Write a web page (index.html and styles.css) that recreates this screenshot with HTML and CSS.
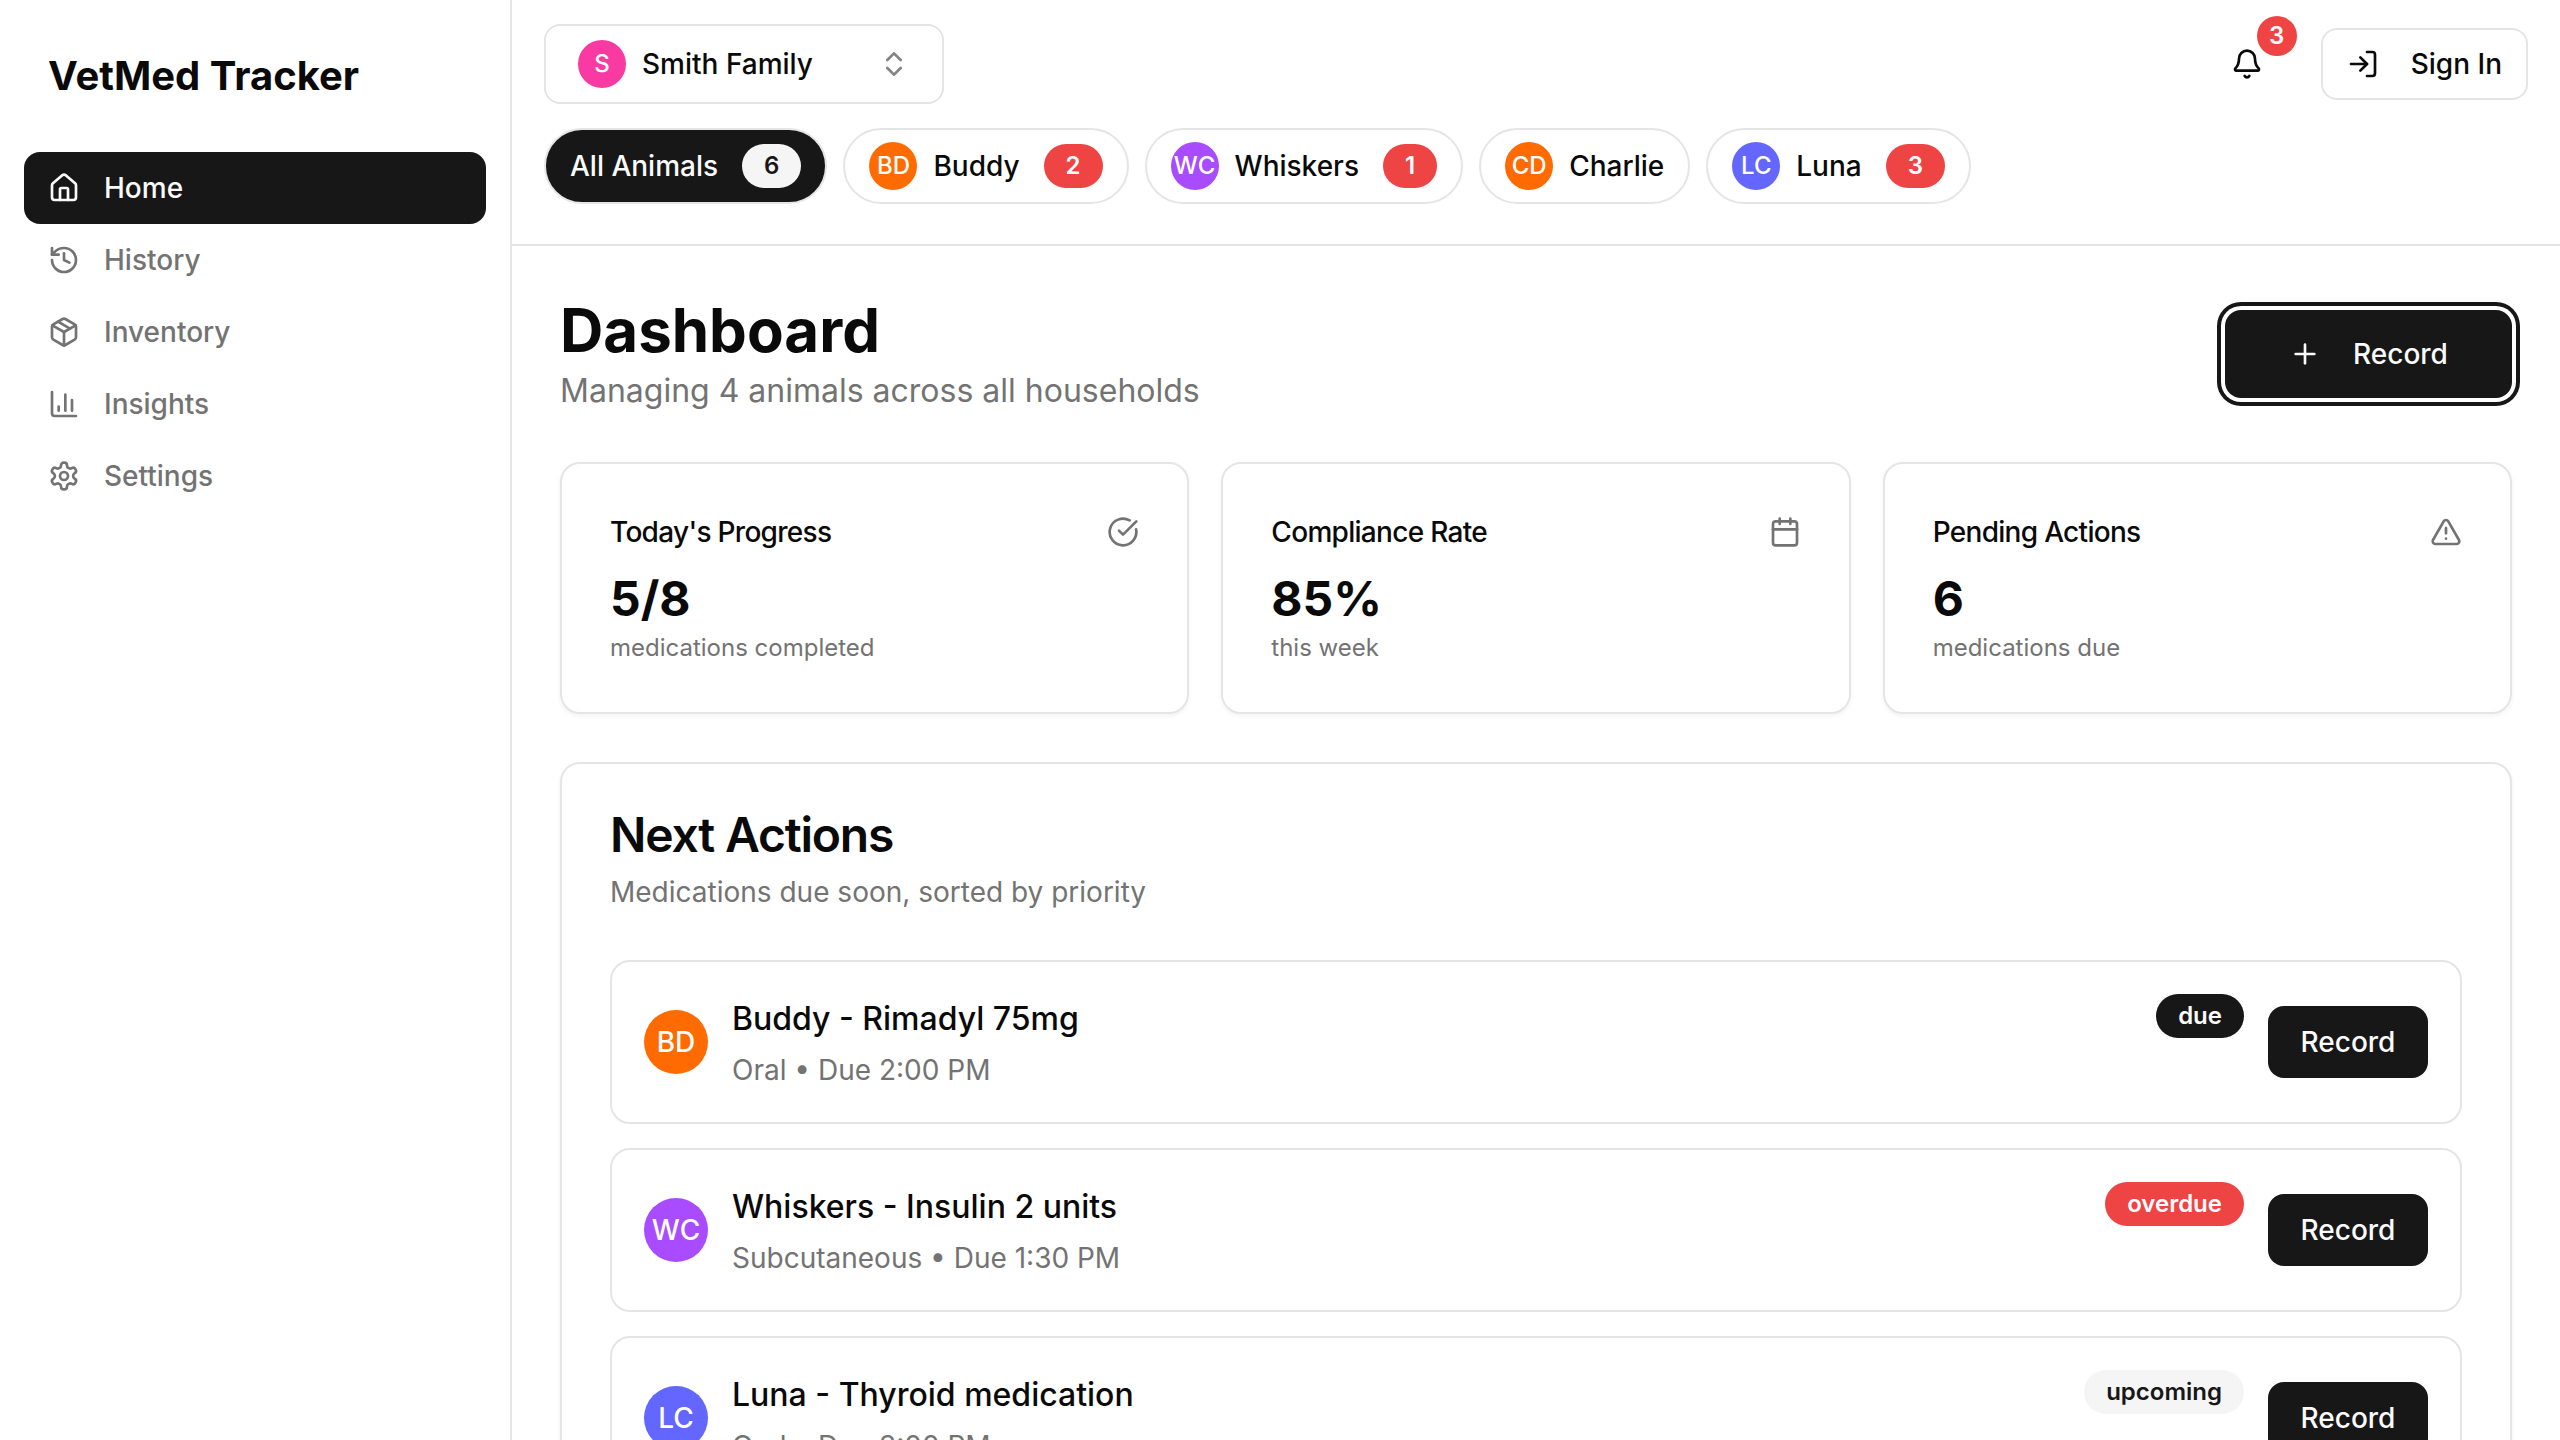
FILE: index.html
```html
<!DOCTYPE html>
<html lang="en">
<head>
    <meta charset="utf-8">
    <title>VetMed Tracker</title>
    <link rel="stylesheet" href="styles.css">
</head>
<body>

    <svg class="defs" width="0" height="0">
        <symbol id="i-house" viewBox="0 0 24 24"><path d="M15 21v-8a1 1 0 0 0-1-1h-4a1 1 0 0 0-1 1v8"/><path d="M3 10a2 2 0 0 1 .709-1.528l7-5.999a2 2 0 0 1 2.582 0l7 5.999A2 2 0 0 1 21 10v9a2 2 0 0 1-2 2H5a2 2 0 0 1-2-2z"/></symbol>
        <symbol id="i-history" viewBox="0 0 24 24"><path d="M3 12a9 9 0 1 0 9-9 9.75 9.75 0 0 0-6.74 2.74L3 8"/><path d="M3 3v5h5"/><path d="M12 7v5l4 2"/></symbol>
        <symbol id="i-package" viewBox="0 0 24 24"><path d="M11 21.73a2 2 0 0 0 2 0l7-4A2 2 0 0 0 21 16V8a2 2 0 0 0-1-1.73l-7-4a2 2 0 0 0-2 0l-7 4A2 2 0 0 0 3 8v8a2 2 0 0 0 1 1.73z"/><path d="M12 22V12"/><polyline points="3.29 7 12 12 20.71 7"/><path d="m7.5 4.27 9 5.15"/></symbol>
        <symbol id="i-chart" viewBox="0 0 24 24"><path d="M3 3v16a2 2 0 0 0 2 2h16"/><path d="M18 17V9"/><path d="M13 17V5"/><path d="M8 17v-3"/></symbol>
        <symbol id="i-settings" viewBox="0 0 24 24"><path d="M12.22 2h-.44a2 2 0 0 0-2 2v.18a2 2 0 0 1-1 1.73l-.43.25a2 2 0 0 1-2 0l-.15-.08a2 2 0 0 0-2.73.73l-.22.38a2 2 0 0 0 .73 2.73l.15.1a2 2 0 0 1 1 1.72v.51a2 2 0 0 1-1 1.74l-.15.09a2 2 0 0 0-.73 2.73l.22.38a2 2 0 0 0 2.73.73l.15-.08a2 2 0 0 1 2 0l.43.25a2 2 0 0 1 1 1.73V20a2 2 0 0 0 2 2h.44a2 2 0 0 0 2-2v-.18a2 2 0 0 1 1-1.73l.43-.25a2 2 0 0 1 2 0l.15.08a2 2 0 0 0 2.73-.73l.22-.39a2 2 0 0 0-.73-2.73l-.15-.08a2 2 0 0 1-1-1.74v-.5a2 2 0 0 1 1-1.74l.15-.09a2 2 0 0 0 .73-2.73l-.22-.38a2 2 0 0 0-2.73-.73l-.15.08a2 2 0 0 1-2 0l-.43-.25a2 2 0 0 1-1-1.73V4a2 2 0 0 0-2-2z"/><circle cx="12" cy="12" r="3"/></symbol>
        <symbol id="i-updown" viewBox="0 0 24 24"><path d="m7 15 5 5 5-5"/><path d="m7 9 5-5 5 5"/></symbol>
        <symbol id="i-bell" viewBox="0 0 24 24"><path d="M10.268 21a2 2 0 0 0 3.464 0"/><path d="M3.262 15.326A1 1 0 0 0 4 17h16a1 1 0 0 0 .74-1.673C19.41 13.956 18 12.499 18 8A6 6 0 0 0 6 8c0 4.499-1.411 5.956-2.738 7.326"/></symbol>
        <symbol id="i-login" viewBox="0 0 24 24"><path d="M15 3h4a2 2 0 0 1 2 2v14a2 2 0 0 1-2 2h-4"/><polyline points="10 17 15 12 10 7"/><line x1="15" y1="12" x2="3" y2="12"/></symbol>
        <symbol id="i-plus" viewBox="0 0 24 24"><path d="M5 12h14"/><path d="M12 5v14"/></symbol>
        <symbol id="i-check" viewBox="0 0 24 24"><path d="M21.801 10A10 10 0 1 1 17 3.335"/><path d="m9 11 3 3L22 4"/></symbol>
        <symbol id="i-calendar" viewBox="0 0 24 24"><path d="M8 2v4"/><path d="M16 2v4"/><rect x="3" y="4" width="18" height="18" rx="2"/><path d="M3 10h18"/></symbol>
        <symbol id="i-alert" viewBox="0 0 24 24"><path d="m21.73 18-8-14a2 2 0 0 0-3.48 0l-8 14A2 2 0 0 0 4 21h16a2 2 0 0 0 1.73-3"/><path d="M12 9v4"/><path d="M12 17h.01"/></symbol>
    </svg>

    <div class="app">
        <aside class="sidebar">
            <div class="logo">VetMed Tracker</div>
            <nav class="nav">
                <a class="nav-item active"><svg class="icon"><use href="#i-house"/></svg>Home</a>
                <a class="nav-item"><svg class="icon"><use href="#i-history"/></svg>History</a>
                <a class="nav-item"><svg class="icon"><use href="#i-package"/></svg>Inventory</a>
                <a class="nav-item"><svg class="icon"><use href="#i-chart"/></svg>Insights</a>
                <a class="nav-item"><svg class="icon"><use href="#i-settings"/></svg>Settings</a>
            </nav>
        </aside>

        <div class="main">
            <header class="topbar">
                <div class="topbar-row">
                    <button class="household">
                        <span class="avatar pink">S</span>
                        <span class="household-name">Smith Family</span>
                        <svg class="icon faded"><use href="#i-updown"/></svg>
                    </button>
                    <div class="topbar-actions">
                        <button class="bell">
                            <svg class="icon"><use href="#i-bell"/></svg>
                            <span class="bell-count">3</span>
                        </button>
                        <button class="signin"><svg class="icon"><use href="#i-login"/></svg>Sign In</button>
                    </div>
                </div>
                <div class="pills">
                    <button class="pill selected">All Animals<span class="count light">6</span></button>
                    <button class="pill"><span class="avatar orange">BD</span><span class="pill-name">Buddy</span><span class="count red">2</span></button>
                    <button class="pill"><span class="avatar purple">WC</span><span class="pill-name">Whiskers</span><span class="count red">1</span></button>
                    <button class="pill"><span class="avatar orange">CD</span><span class="pill-name">Charlie</span></button>
                    <button class="pill"><span class="avatar indigo">LC</span><span class="pill-name">Luna</span><span class="count red">3</span></button>
                </div>
            </header>

            <main class="content">
                <div class="page-head">
                    <div>
                        <h1>Dashboard</h1>
                        <p class="page-sub">Managing 4 animals across all households</p>
                    </div>
                    <button class="record-main"><svg class="icon"><use href="#i-plus"/></svg>Record</button>
                </div>

                <div class="stats">
                    <section class="card stat">
                        <div class="stat-head"><span>Today's Progress</span><svg class="icon muted"><use href="#i-check"/></svg></div>
                        <div class="stat-value">5/8</div>
                        <div class="stat-note">medications completed</div>
                    </section>
                    <section class="card stat">
                        <div class="stat-head"><span>Compliance Rate</span><svg class="icon muted"><use href="#i-calendar"/></svg></div>
                        <div class="stat-value">85%</div>
                        <div class="stat-note">this week</div>
                    </section>
                    <section class="card stat">
                        <div class="stat-head"><span>Pending Actions</span><svg class="icon muted"><use href="#i-alert"/></svg></div>
                        <div class="stat-value">6</div>
                        <div class="stat-note">medications due</div>
                    </section>
                </div>

                <section class="card actions">
                    <h2>Next Actions</h2>
                    <p class="actions-sub">Medications due soon, sorted by priority</p>

                    <div class="rows">
                        <div class="row">
                            <span class="avatar big orange">BD</span>
                            <div class="row-text">
                                <div class="row-title">Buddy - Rimadyl 75mg</div>
                                <div class="row-sub">Oral • Due 2:00 PM</div>
                            </div>
                            <span class="badge dark">due</span>
                            <button class="record">Record</button>
                        </div>
                        <div class="row">
                            <span class="avatar big purple">WC</span>
                            <div class="row-text">
                                <div class="row-title">Whiskers - Insulin 2 units</div>
                                <div class="row-sub">Subcutaneous • Due 1:30 PM</div>
                            </div>
                            <span class="badge red">overdue</span>
                            <button class="record">Record</button>
                        </div>
                        <div class="row">
                            <span class="avatar big indigo">LC</span>
                            <div class="row-text">
                                <div class="row-title">Luna - Thyroid medication</div>
                                <div class="row-sub">Oral • Due 3:00 PM</div>
                            </div>
                            <span class="badge grey">upcoming</span>
                            <button class="record">Record</button>
                        </div>
                    </div>
                </section>
            </main>
        </div>
    </div>

</body>
</html>
```

FILE: styles.css
```css
* {
    box-sizing: border-box;
}
html, body {
    margin: 0;
    height: 100%;
    overflow: hidden;
}
body {
    font-family: Inter, "Liberation Sans", sans-serif;
    color: #0a0a0a;
    background-color: #fff;
    font-size: 28px;
    line-height: 40px;
}
button {
    font: inherit;
    color: inherit;
    background: none;
    border: 0;
    padding: 0;
}
h1, h2, p {
    margin: 0;
}
.defs {
    position: absolute;
}
.icon {
    width: 32px;
    height: 32px;
    flex: none;
    fill: none;
    stroke: currentColor;
    stroke-width: 2;
    stroke-linecap: round;
    stroke-linejoin: round;
}
.icon.muted {
    color: #737373;
}
.icon.faded {
    opacity: .5;
}

.app {
    display: grid;
    grid-template-columns: 512px 1fr;
    height: 1440px;
}

/* sidebar */
.sidebar {
    border-right: 2px solid #e5e5e5;
    padding: 48px 24px;
}
.logo {
    font-size: 40px;
    line-height: 56px;
    font-weight: 700;
    padding-left: 24px;
    height: 104px;
}
.nav {
    display: flex;
    flex-direction: column;
}
.nav-item {
    display: flex;
    align-items: center;
    gap: 24px;
    height: 72px;
    padding: 0 24px;
    border-radius: 16px;
    font-weight: 500;
    color: #737373;
}
.nav-item.active {
    background-color: #171717;
    color: #fafafa;
}

/* top bar */
.topbar {
    border-bottom: 2px solid #e5e5e5;
    padding: 24px 32px 40px;
}
.topbar-row {
    display: flex;
    align-items: center;
    justify-content: space-between;
}
.household {
    display: flex;
    align-items: center;
    gap: 16px;
    width: 400px;
    height: 80px;
    padding: 0 32px;
    border: 2px solid #e5e5e5;
    border-radius: 16px;
    font-weight: 500;
}
.household-name {
    flex: 1;
    text-align: left;
}
.topbar-actions {
    display: flex;
    align-items: center;
    gap: 38px;
}
.bell {
    position: relative;
    display: flex;
    align-items: center;
    justify-content: center;
    width: 72px;
    height: 72px;
}
.bell-count {
    position: absolute;
    top: -12px;
    right: -14px;
    width: 40px;
    height: 40px;
    border-radius: 50%;
    background-color: #ef4444;
    color: #fff;
    font-size: 24px;
    line-height: 40px;
    font-weight: 600;
    text-align: center;
}
.signin {
    display: flex;
    align-items: center;
    gap: 32px;
    height: 72px;
    padding: 0 24px;
    border: 2px solid #e5e5e5;
    border-radius: 16px;
    font-weight: 500;
}

.pills {
    display: flex;
    gap: 16px;
    margin-top: 24px;
}
.pill {
    display: flex;
    align-items: center;
    height: 76px;
    padding: 0 24px;
    border: 2px solid #e5e5e5;
    border-radius: 38px;
    font-weight: 500;
    white-space: nowrap;
}
.pill.selected {
    background-color: #171717;
    color: #fafafa;
}
.pill-name {
    margin-left: 16px;
}
.count {
    margin-left: 24px;
    height: 44px;
    padding: 0 22px;
    border-radius: 22px;
    font-size: 24px;
    line-height: 44px;
    font-weight: 600;
}
.count.light {
    background-color: #f5f5f5;
    color: #171717;
}
.count.red {
    background-color: #ef4444;
    color: #fff;
}

.avatar {
    display: flex;
    align-items: center;
    justify-content: center;
    width: 48px;
    height: 48px;
    flex: none;
    border-radius: 50%;
    color: #fff;
    font-size: 24px;
    font-weight: 500;
}
.avatar.big {
    width: 64px;
    height: 64px;
    font-size: 28px;
}
.pink { background-color: #f83aa2; }
.orange { background-color: #ff6b00; }
.purple { background-color: #a94bff; }
.indigo { background-color: #6366ff; }

/* page */
.content {
    padding: 48px;
}
.page-head {
    display: flex;
    align-items: center;
    justify-content: space-between;
}
h1 {
    font-size: 60px;
    line-height: 72px;
    font-weight: 700;
}
.page-sub {
    padding-top: 2px;
    font-size: 32px;
    line-height: 46px;
    color: #737373;
}
.record-main {
    display: flex;
    align-items: center;
    justify-content: center;
    gap: 32px;
    width: 287px;
    height: 88px;
    border-radius: 16px;
    background-color: #171717;
    color: #fafafa;
    font-weight: 500;
    box-shadow: 0 0 0 4px #fff, 0 0 0 8px #171717;
}

.card {
    border: 2px solid #e5e5e5;
    border-radius: 20px;
    box-shadow: 0 2px 4px rgba(0, 0, 0, .05);
}
.stats {
    display: grid;
    grid-template-columns: repeat(3, 1fr);
    gap: 32px;
    margin-top: 48px;
}
.stat {
    padding: 48px;
}
.stat-head {
    display: flex;
    align-items: center;
    justify-content: space-between;
    font-weight: 500;
    letter-spacing: -.7px;
}
.stat-value {
    margin: 15px 0 1px;
    font-size: 48px;
    line-height: 64px;
    font-weight: 700;
}
.stat-note {
    font-size: 24px;
    line-height: 32px;
    color: #737373;
}

.actions {
    margin-top: 48px;
    padding: 48px;
}
h2 {
    font-size: 48px;
    line-height: 46px;
    font-weight: 600;
    letter-spacing: -1.2px;
}
.actions-sub {
    margin-top: 14px;
    color: #737373;
}
.rows {
    display: flex;
    flex-direction: column;
    gap: 24px;
    margin-top: 48px;
}
.row {
    display: flex;
    align-items: center;
    padding: 32px;
    border: 2px solid #e5e5e5;
    border-radius: 20px;
}
.row-text {
    flex: 1;
    margin-left: 24px;
}
.row-title {
    padding-top: 2px;
    font-size: 32px;
    line-height: 46px;
    font-weight: 500;
}
.row-sub {
    margin-top: 8px;
    color: #737373;
}
.badge {
    align-self: flex-start;
    height: 44px;
    padding: 0 22px;
    border-radius: 22px;
    font-size: 24px;
    line-height: 44px;
    font-weight: 600;
}
.badge.dark {
    background-color: #171717;
    color: #fafafa;
}
.badge.red {
    background-color: #ef4444;
    color: #fff;
}
.badge.grey {
    background-color: #f5f5f5;
    color: #171717;
}
.record {
    width: 160px;
    height: 72px;
    margin-left: 24px;
    border-radius: 16px;
    background-color: #171717;
    color: #fafafa;
    font-weight: 500;
}
```
